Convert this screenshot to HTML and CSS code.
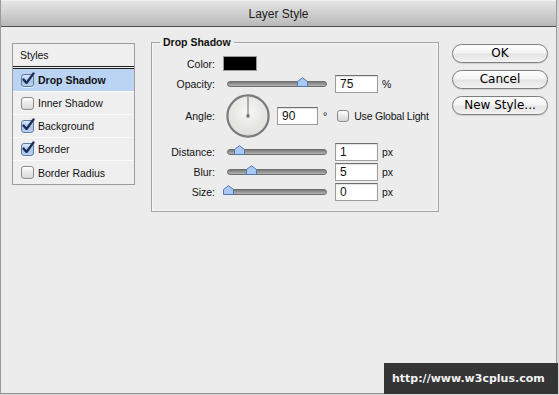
FILE: index.html
```html
<!DOCTYPE html>
<html lang="en">
<head>
  <meta charset="UTF-8">
  <meta name="viewport" content="width=device-width, initial-scale=1.0">
  <title>Layer Style</title>
  <link rel="stylesheet" href="styles.css">
</head>
<body>
  <div class="window">
    <div class="titlebar">Layer Style</div>

    <div class="content">
      <!-- Left: list of styles -->
      <div class="styles-list">
        <div class="styles-head">Styles</div>
        <div class="style-row selected">
          <span class="cb on"><svg width="15" height="15" viewBox="0 0 15 15"><path d="M2.5 7.5 L5.5 11 L12.5 1.5" /></svg></span>
          <span class="style-name">Drop Shadow</span>
        </div>
        <div class="style-row">
          <span class="cb"></span>
          <span class="style-name">Inner Shadow</span>
        </div>
        <div class="style-row">
          <span class="cb on"><svg width="15" height="15" viewBox="0 0 15 15"><path d="M2.5 7.5 L5.5 11 L12.5 1.5" /></svg></span>
          <span class="style-name">Background</span>
        </div>
        <div class="style-row">
          <span class="cb on"><svg width="15" height="15" viewBox="0 0 15 15"><path d="M2.5 7.5 L5.5 11 L12.5 1.5" /></svg></span>
          <span class="style-name">Border</span>
        </div>
        <div class="style-row last">
          <span class="cb"></span>
          <span class="style-name">Border Radius</span>
        </div>
      </div>

      <!-- Middle: drop shadow settings -->
      <fieldset class="group">
        <legend>Drop Shadow</legend>

        <div class="row row-color">
          <span class="lbl">Color:</span>
          <span class="swatch"></span>
        </div>

        <div class="row">
          <span class="lbl">Opacity:</span>
          <div class="slider">
            <span class="thumb" style="left: 75%;"><svg width="11" height="10" viewBox="0 0 11 10"><path d="M0.5 4.5 L5.5 0.7 L10.5 4.5 V9.5 H0.5 Z" /></svg></span>
          </div>
          <span class="field">75</span>
          <span class="unit">%</span>
        </div>

        <div class="row row-angle">
          <span class="lbl">Angle:</span>
          <svg class="dial" width="44" height="44" viewBox="0 0 44 44">
            <defs>
              <radialGradient id="dialFill" cx="50%" cy="40%" r="60%">
                <stop offset="0" stop-color="#f7f7f5"/>
                <stop offset="1" stop-color="#dededb"/>
              </radialGradient>
            </defs>
            <circle cx="22" cy="22" r="20.6" fill="url(#dialFill)" stroke="#7b7b7b" stroke-width="2.2"/>
            <line x1="22" y1="3" x2="22" y2="22" stroke="#6a6a6a" stroke-width="1"/>
            <rect x="20.5" y="20.5" width="3" height="3" fill="#6a6a6a"/>
          </svg>
          <span class="field field-angle">90</span>
          <span class="unit deg">°</span>
          <span class="cb global"></span>
          <span class="global-lbl">Use Global Light</span>
        </div>

        <div class="row row-size">
          <span class="lbl">Distance:</span>
          <div class="slider">
            <span class="thumb" style="left: 11%;"><svg width="11" height="10" viewBox="0 0 11 10"><path d="M0.5 4.5 L5.5 0.7 L10.5 4.5 V9.5 H0.5 Z" /></svg></span>
          </div>
          <span class="field">1</span>
          <span class="unit">px</span>
        </div>

        <div class="row row-size">
          <span class="lbl">Blur:</span>
          <div class="slider">
            <span class="thumb" style="left: 23%;"><svg width="11" height="10" viewBox="0 0 11 10"><path d="M0.5 4.5 L5.5 0.7 L10.5 4.5 V9.5 H0.5 Z" /></svg></span>
          </div>
          <span class="field">5</span>
          <span class="unit">px</span>
        </div>

        <div class="row row-size">
          <span class="lbl">Size:</span>
          <div class="slider">
            <span class="thumb" style="left: 0%;"><svg width="11" height="10" viewBox="0 0 11 10"><path d="M0.5 4.5 L5.5 0.7 L10.5 4.5 V9.5 H0.5 Z" /></svg></span>
          </div>
          <span class="field">0</span>
          <span class="unit">px</span>
        </div>
      </fieldset>

      <!-- Right: dialog buttons -->
      <div class="buttons">
        <button type="button" class="btn">OK</button>
        <button type="button" class="btn">Cancel</button>
        <button type="button" class="btn">New Style...</button>
      </div>
    </div>

    <div class="watermark">http://www.w3cplus.com</div>
  </div>
</body>
</html>
```

FILE: styles.css
```css
*, *::before, *::after {
  box-sizing: border-box;
}
body {
  margin: 0;
  background: #d6d6d6;
  font-family: "Liberation Sans", Arial, sans-serif;
  font-size: 10.5px;
  color: #111;
}
.window {
  position: relative;
  width: 557px;
  height: 394px;
  background: #ececec;
  border-left: 1px solid #9a9a9a;
  border-right: 1px solid #9a9a9a;
  border-bottom: 1px solid #8e8e8e;
}

/* Title bar */
.titlebar {
  height: 27px;
  line-height: 26px;
  text-align: center;
  font-size: 12px;
  color: #1b1b1b;
  background: linear-gradient(#e4e4e4, #cfcfcf 50%, #b8b8b8);
  border-top: 1px solid #f2f2f2;
  border-bottom: 1px solid #505050;
}

.content {
  display: flex;
  align-items: flex-start;
  padding: 17px 0 0 11px;
}

/* Styles list */
.styles-list {
  width: 123px;
  margin-top: -1px;
  border: 1px solid #9c9c9c;
  background: #efefef;
}
.styles-head {
  height: 25px;
  line-height: 23px;
  padding-left: 7px;
  border-bottom: 3px double #1e1e1e;
}
.style-row {
  display: flex;
  align-items: center;
  gap: 4px;
  height: 23px;
  padding-left: 8px;
  border-bottom: 1px solid #fbfbfb;
}
.style-row.last {
  border-bottom: none;
}
.style-row.selected {
  background: #bcd4f4;
  font-weight: bold;
}

/* Aqua style checkbox */
.cb {
  position: relative;
  display: inline-block;
  flex: none;
  width: 13px;
  height: 13px;
  border: 1px solid #8b8b8b;
  border-radius: 3px;
  background: linear-gradient(#ffffff, #e9e9e9 50%, #d9d9d9);
  box-shadow: 0 1px 0 rgba(255, 255, 255, 0.6);
}
.cb.on {
  border-color: #5c7aa4;
  background: linear-gradient(#dbe8f8, #a8c4e8 55%, #bcd3f0);
}
.cb svg {
  position: absolute;
  left: -1px;
  top: -3px;
}
.cb svg path {
  fill: none;
  stroke: #1b2c55;
  stroke-width: 2.3;
  stroke-linecap: round;
  stroke-linejoin: round;
}

/* Drop shadow group */
.group {
  width: 288px;
  margin: -8px 0 0 16px;
  padding: 7px 0 9px 0;
  border: 1px solid #a2a2a2;
  box-shadow: inset 0 0 0 1px #f6f6f6;
}
.group legend {
  margin-left: 8px;
  padding: 0 3px;
  line-height: 12px;
  font-weight: bold;
}
.row {
  display: flex;
  align-items: center;
  height: 19px;
}
.row-color {
  height: 17px;
  margin-bottom: 2px;
}
.row-angle {
  height: 46px;
  margin: 0 0 3px;
}
.row-size {
  height: 20px;
}
.lbl {
  width: 63px;
  text-align: right;
  flex: none;
}
.swatch {
  width: 34px;
  height: 15px;
  margin-left: 8px;
  background: #000;
  border: 1px solid #9a9a9a;
}

/* Slider */
.slider {
  position: relative;
  width: 100px;
  height: 6px;
  margin: 0 8px 0 12px;
  border: 1px solid #6d6d6d;
  border-radius: 3px;
  background: linear-gradient(#7c7c7c, #9c9c9c 60%, #b4b4b4);
}
.thumb {
  position: absolute;
  top: -5px;
  width: 11px;
  height: 10px;
  margin-left: -5px;
}
.thumb svg {
  display: block;
}
.thumb path {
  fill: #a9c9f1;
  stroke: #4d77b3;
  stroke-width: 1;
}

.field {
  width: 43px;
  height: 18px;
  line-height: 16px;
  padding-left: 4px;
  font-size: 12px;
  background: #fff;
  border: 1px solid #9d9d9d;
  border-top-color: #6f6f6f;
  box-shadow: inset 0 1px 1px rgba(0, 0, 0, 0.12);
}
.unit {
  margin-left: 4px;
}

.dial {
  flex: none;
  margin-left: 11px;
}
.field-angle {
  width: 41px;
  margin-left: 7px;
}
.deg {
  margin-left: 5px;
}
.cb.global {
  margin-left: 10px;
  width: 12px;
  height: 12px;
}
.global-lbl {
  margin-left: 5px;
  letter-spacing: -0.2px;
}

/* Buttons */
.buttons {
  display: flex;
  flex-direction: column;
  gap: 7px;
  margin-left: 13px;
}
.btn {
  width: 96px;
  height: 19px;
  padding: 0;
  font-family: "DejaVu Sans", sans-serif;
  font-size: 12px;
  line-height: 17px;
  color: #000;
  border: 1px solid #7e7e7e;
  border-radius: 10px;
  background: linear-gradient(#ffffff, #f4f4f4 45%, #e4e4e4 55%, #f2f2f2);
  box-shadow: 0 1px 1px rgba(0, 0, 0, 0.12);
}

/* Site watermark in the corner */
.watermark {
  position: absolute;
  right: -2px;
  bottom: -1px;
  width: 174px;
  height: 31px;
  line-height: 31px;
  padding-left: 8px;
  background: #353535;
  color: #f2f2f2;
  font-family: "DejaVu Sans", sans-serif;
  font-weight: bold;
  font-size: 11px;
}
```
